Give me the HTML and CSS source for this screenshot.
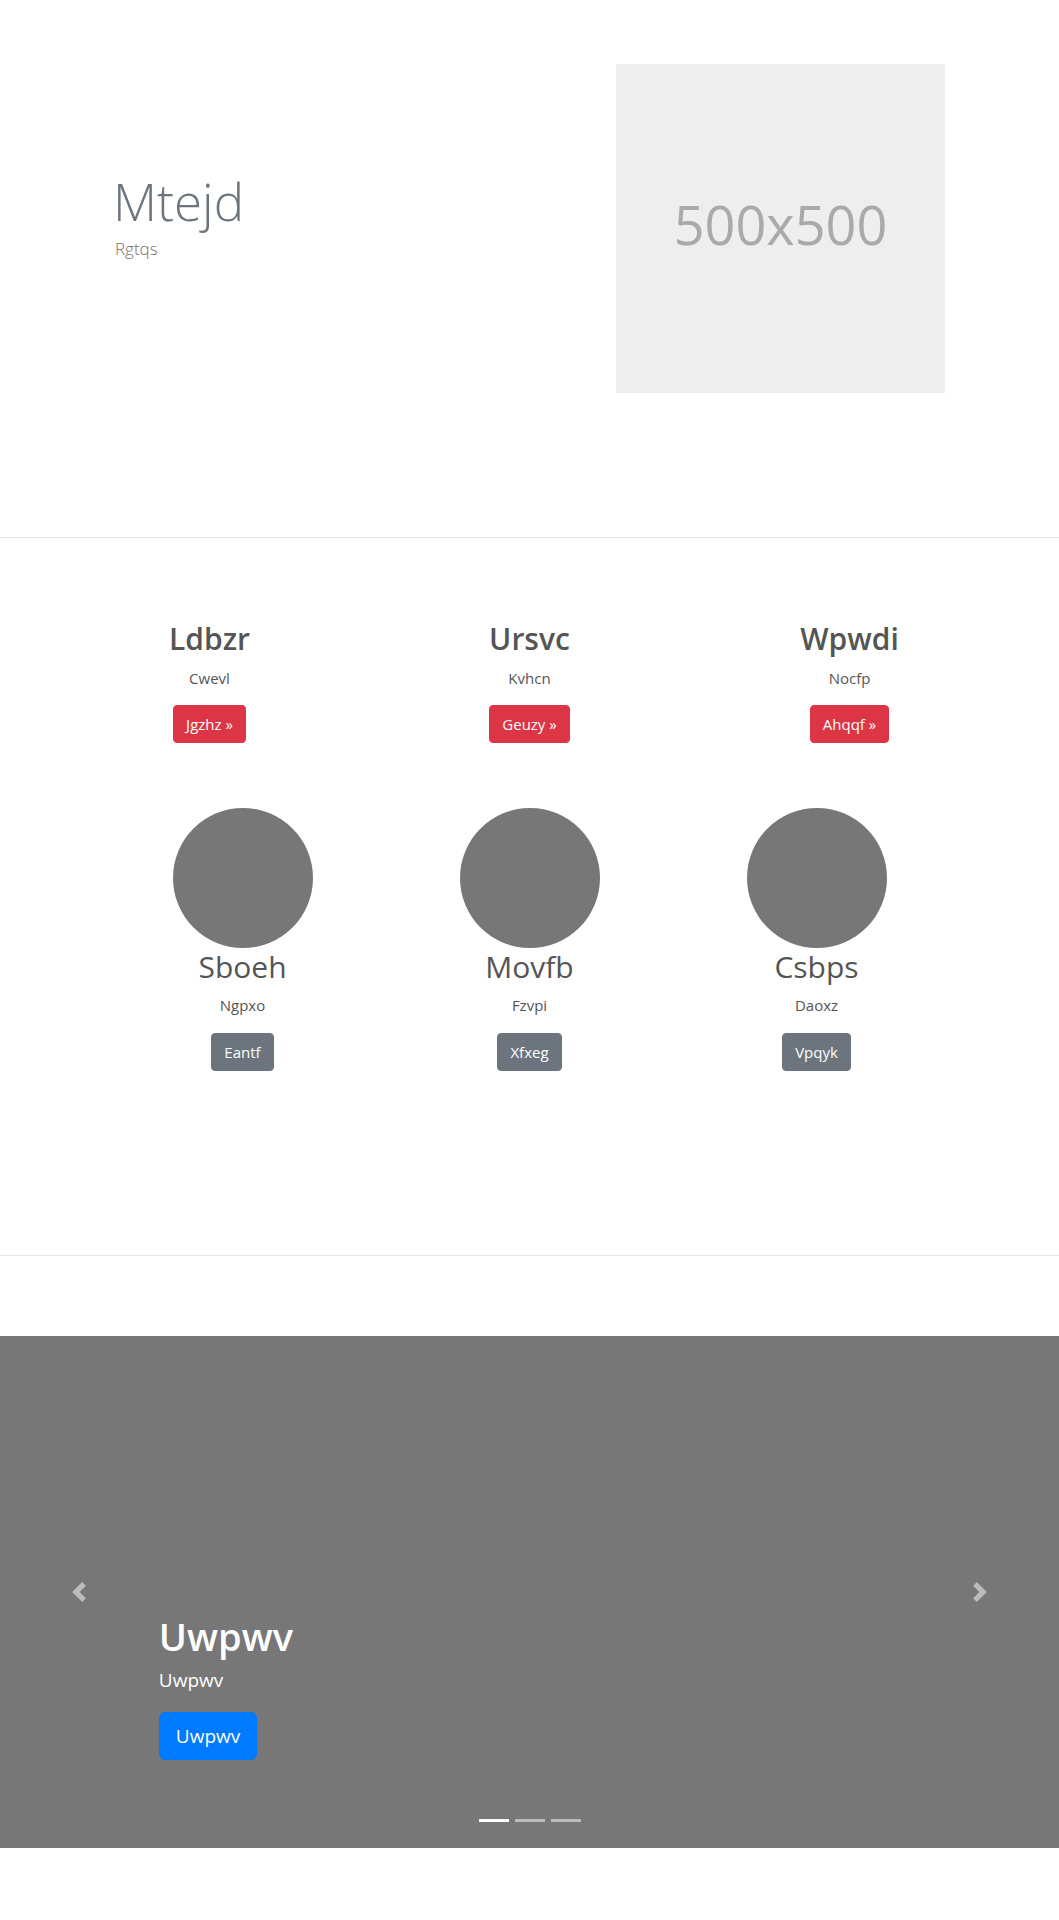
FILE: index.html
```html
<!DOCTYPE html>
<html lang="en">
<head>
<meta charset="utf-8">
<title>Mtejd</title>
<link rel="stylesheet" href="styles.css">
</head>
<body>
<section class="hero">
  <div class="hero-text">
    <h1 class="hero-title">Mtejd</h1>
    <p class="hero-sub">Rgtqs</p>
  </div>
  <div class="placeholder">500x500</div>
</section>

<section class="features">
  <div class="feature-row">
    <div class="feature">
      <h2 class="feature-title">Ldbzr</h2>
      <p class="feature-text">Cwevl</p>
      <a class="btn btn-danger" href="#">Jgzhz &raquo;</a>
    </div>
    <div class="feature">
      <h2 class="feature-title">Ursvc</h2>
      <p class="feature-text">Kvhcn</p>
      <a class="btn btn-danger" href="#">Geuzy &raquo;</a>
    </div>
    <div class="feature">
      <h2 class="feature-title">Wpwdi</h2>
      <p class="feature-text">Nocfp</p>
      <a class="btn btn-danger" href="#">Ahqqf &raquo;</a>
    </div>
  </div>

  <div class="people-row">
    <div class="person">
      <div class="avatar"></div>
      <h2 class="person-name">Sboeh</h2>
      <p class="person-text">Ngpxo</p>
      <a class="btn btn-secondary" href="#">Eantf</a>
    </div>
    <div class="person">
      <div class="avatar"></div>
      <h2 class="person-name">Movfb</h2>
      <p class="person-text">Fzvpi</p>
      <a class="btn btn-secondary" href="#">Xfxeg</a>
    </div>
    <div class="person">
      <div class="avatar"></div>
      <h2 class="person-name">Csbps</h2>
      <p class="person-text">Daoxz</p>
      <a class="btn btn-secondary" href="#">Vpqyk</a>
    </div>
  </div>
</section>

<section class="carousel">
  <div class="carousel-caption">
    <h1 class="caption-title">Uwpwv</h1>
    <p class="caption-text">Uwpwv</p>
    <a class="btn btn-primary btn-lg" href="#">Uwpwv</a>
  </div>
  <a class="carousel-control prev" href="#" aria-label="Previous">
    <svg class="control-icon" viewBox="0 0 8 8" width="20" height="20"><path d="M5.25 0l-4 4 4 4 1.5-1.5L4.25 4l2.5-2.5L5.25 0z"/></svg>
  </a>
  <a class="carousel-control next" href="#" aria-label="Next">
    <svg class="control-icon" viewBox="0 0 8 8" width="20" height="20"><path d="M2.75 0l-1.5 1.5L3.75 4l-2.5 2.5L2.75 8l4-4-4-4z"/></svg>
  </a>
  <ol class="indicators">
    <li class="indicator active"></li>
    <li class="indicator"></li>
    <li class="indicator"></li>
  </ol>
</section>
</body>
</html>
```

FILE: styles.css
```css
* { box-sizing: border-box; }

body {
  margin: 0;
  font-family: "Open Sans", "Noto Sans", sans-serif;
  font-size: 16px;
  line-height: 1.5;
  color: #212529;
  background: #fff;
}

h1, h2, p { margin: 0; }

/* Hero */
.hero {
  display: grid;
  grid-template-columns: 1fr 329px;
  padding: 64px 114px 144px 115px;
  border-bottom: 1px solid #e5e5e5;
}
.hero-text {
  align-self: center;
  padding-bottom: 24px;
}
.hero-title {
  font-size: 51px;
  font-weight: 300;
  line-height: 1.2;
  color: #6c757d;
  margin-left: -2px;
  margin-bottom: 4px;
}
.hero-sub {
  font-size: 17px;
  font-weight: 300;
  color: #7d7468;
}
.placeholder {
  width: 329px;
  height: 329px;
  background: #eee;
  color: #aaa;
  display: flex;
  align-items: center;
  justify-content: center;
  font-size: 54px;
  padding-bottom: 8px;
}

/* Features */
.features {
  padding: 83px 0 0;
  height: 718px;
  border-bottom: 1px solid #e5e5e5;
}
.feature-row {
  width: 960px;
  margin: 0 auto;
  display: grid;
  grid-template-columns: repeat(3, 1fr);
}
.feature {
  text-align: center;
  padding: 0 15px;
}
.feature-title {
  font-size: 30px;
  font-weight: 600;
  line-height: 1.2;
  color: #555;
}
.feature-text {
  font-size: 15px;
  color: #555;
  margin: 10px 0 15px;
}

.btn {
  display: inline-block;
  font-size: 15px;
  line-height: 24px;
  padding: 6px 12px;
  border: 1px solid transparent;
  border-radius: 4px;
  color: #fff;
  text-decoration: none;
}
.btn-danger { background: #dc3545; border-color: #dc3545; }
.btn-secondary { background: #6c757d; border-color: #6c757d; }
.btn-primary { background: #007bff; border-color: #007bff; }
.btn-lg {
  font-size: 19px;
  line-height: 30px;
  padding: 8px 16px;
  border-radius: 6px;
}

.people-row {
  width: 861px;
  margin: 65px auto 0;
  display: grid;
  grid-template-columns: repeat(3, 1fr);
}
.person {
  text-align: center;
}
.avatar {
  width: 140px;
  height: 140px;
  border-radius: 50%;
  background: #777;
  margin: 0 auto;
}
.person-name {
  font-size: 30px;
  font-weight: 400;
  line-height: 1.2;
  color: #555;
  margin-top: 1px;
}
.person-text {
  font-size: 15px;
  color: #555;
  margin: 9px 0 17px;
}

/* Carousel */
.carousel {
  position: relative;
  margin-top: 80px;
  height: 512px;
  background: #777;
}
.carousel-caption {
  position: absolute;
  left: 15%;
  right: 15%;
  bottom: 88px;
  color: #fff;
}
.caption-title {
  font-size: 38px;
  font-weight: 600;
  line-height: 1.2;
}
.caption-text {
  font-size: 19px;
  margin: 6px 0 18px;
}
.carousel-control {
  position: absolute;
  top: 0;
  bottom: 0;
  width: 15%;
  display: flex;
  align-items: center;
  justify-content: center;
  opacity: .5;
}
.carousel-control.prev { left: 0; }
.carousel-control.next { right: 0; }
.control-icon { fill: #fff; }
.indicators {
  position: absolute;
  left: 0;
  right: 0;
  bottom: 16px;
  margin: 0;
  padding: 0;
  list-style: none;
  display: flex;
  justify-content: center;
  gap: 6px;
}
.indicator {
  width: 30px;
  height: 3px;
  margin: 10px 0;
  background: #fff;
  opacity: .5;
}
.indicator.active { opacity: 1; }
```
